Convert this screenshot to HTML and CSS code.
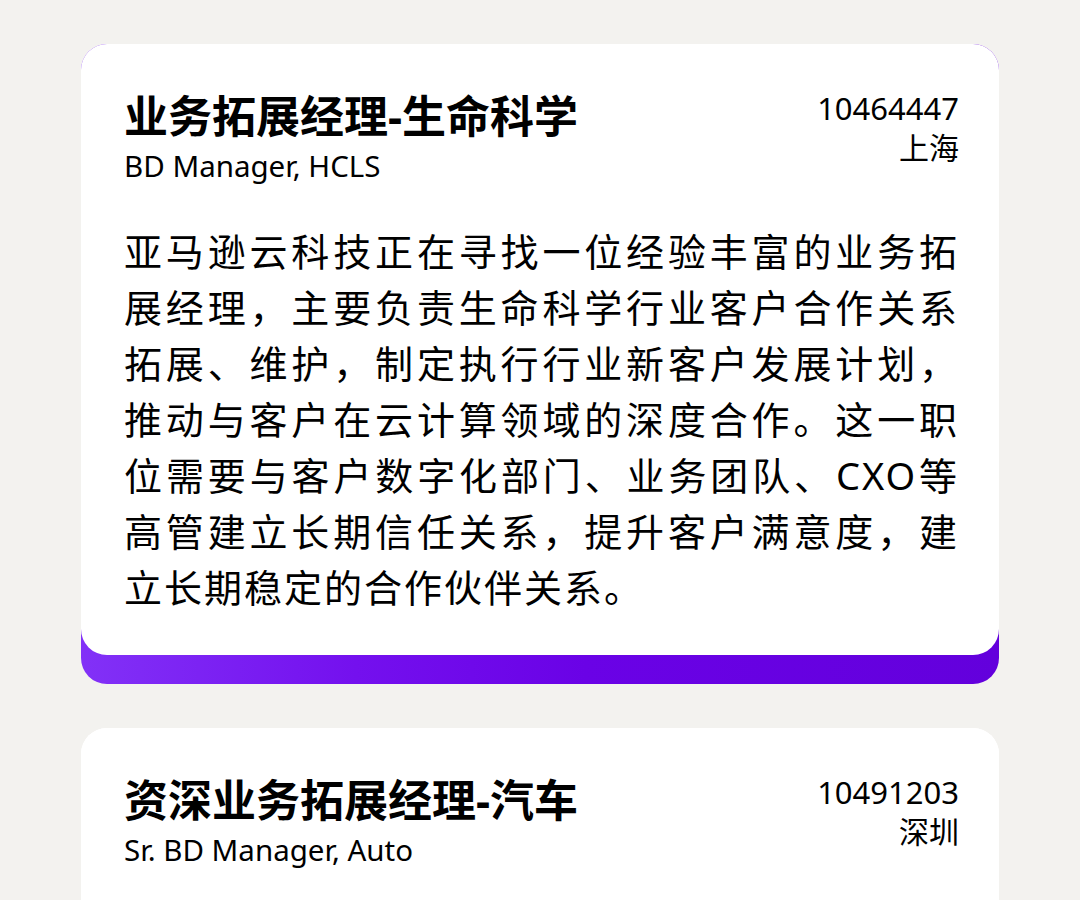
FILE: index.html
```html
<!DOCTYPE html>
<html lang="zh-CN">
<head>
  <meta charset="UTF-8">
  <title>职位列表</title>
  <link rel="stylesheet" href="styles.css">
</head>
<body>
<div class="jobs">
  <div class="job active">
    <div class="job-body">
      <div class="job-head">
        <div class="job-title">
          <h3>业务拓展经理-生命科学</h3>
          <div class="job-en">BD Manager, HCLS</div>
        </div>
        <div class="job-meta">
          <div class="job-id">10464447</div>
          <div class="job-city">上海</div>
        </div>
      </div>
      <p class="job-desc">亚马逊云科技正在寻找一位经验丰富的业务拓展经理，主要负责生命科学行业客户合作关系拓展、维护，制定执行行业新客户发展计划，推动与客户在云计算领域的深度合作。这一职位需要与客户数字化部门、业务团队、CXO等高管建立长期信任关系，提升客户满意度，建立长期稳定的合作伙伴关系。</p>
    </div>
  </div>

  <div class="job">
    <div class="job-body">
      <div class="job-head">
        <div class="job-title">
          <h3>资深业务拓展经理-汽车</h3>
          <div class="job-en">Sr. BD Manager, Auto</div>
        </div>
        <div class="job-meta">
          <div class="job-id">10491203</div>
          <div class="job-city">深圳</div>
        </div>
      </div>
      <p class="job-desc">亚马逊云科技正在寻找一位资深业务拓展经理，负责汽车行业客户的业务拓展与合作关系维护，推动客户在云计算领域的创新与落地。</p>
    </div>
  </div>
</div>
</body>
</html>
```

FILE: styles.css
```css
body {
  margin: 0;
  background: #f3f2ef;
  font-family: "Noto Sans", "Noto Sans CJK SC", sans-serif;
  color: #000;
}
.jobs {
  display: flex;
  flex-direction: column;
  gap: 44px;
  padding: 44px 81px;
}
.job {
  border-radius: 26px;
  background: #fff;
}
.job.active {
  background: linear-gradient(90deg, #8231f7, #7410ee 30%, #6a02e6 55%, #6300dc);
  padding-bottom: 29px;
}
.job-body {
  background: #fff;
  border-radius: 26px;
  padding: 44px 40px 40px 43px;
}
.job-head {
  display: flex;
  justify-content: space-between;
  align-items: flex-start;
}
.job-title h3 {
  margin: 0;
  font-size: 44px;
  font-weight: bold;
  line-height: 56px;
}
.job-en {
  margin-top: 2px;
  font-size: 29.5px;
  line-height: 40px;
}
.job-meta {
  text-align: right;
  font-size: 30px;
  line-height: 40px;
}
.job-id {
  font-size: 31px;
}
.job-desc {
  margin: 37px 0 0;
  font-size: 38px;
  line-height: 56px;
  letter-spacing: 2px;
  text-align: justify;
}
```
